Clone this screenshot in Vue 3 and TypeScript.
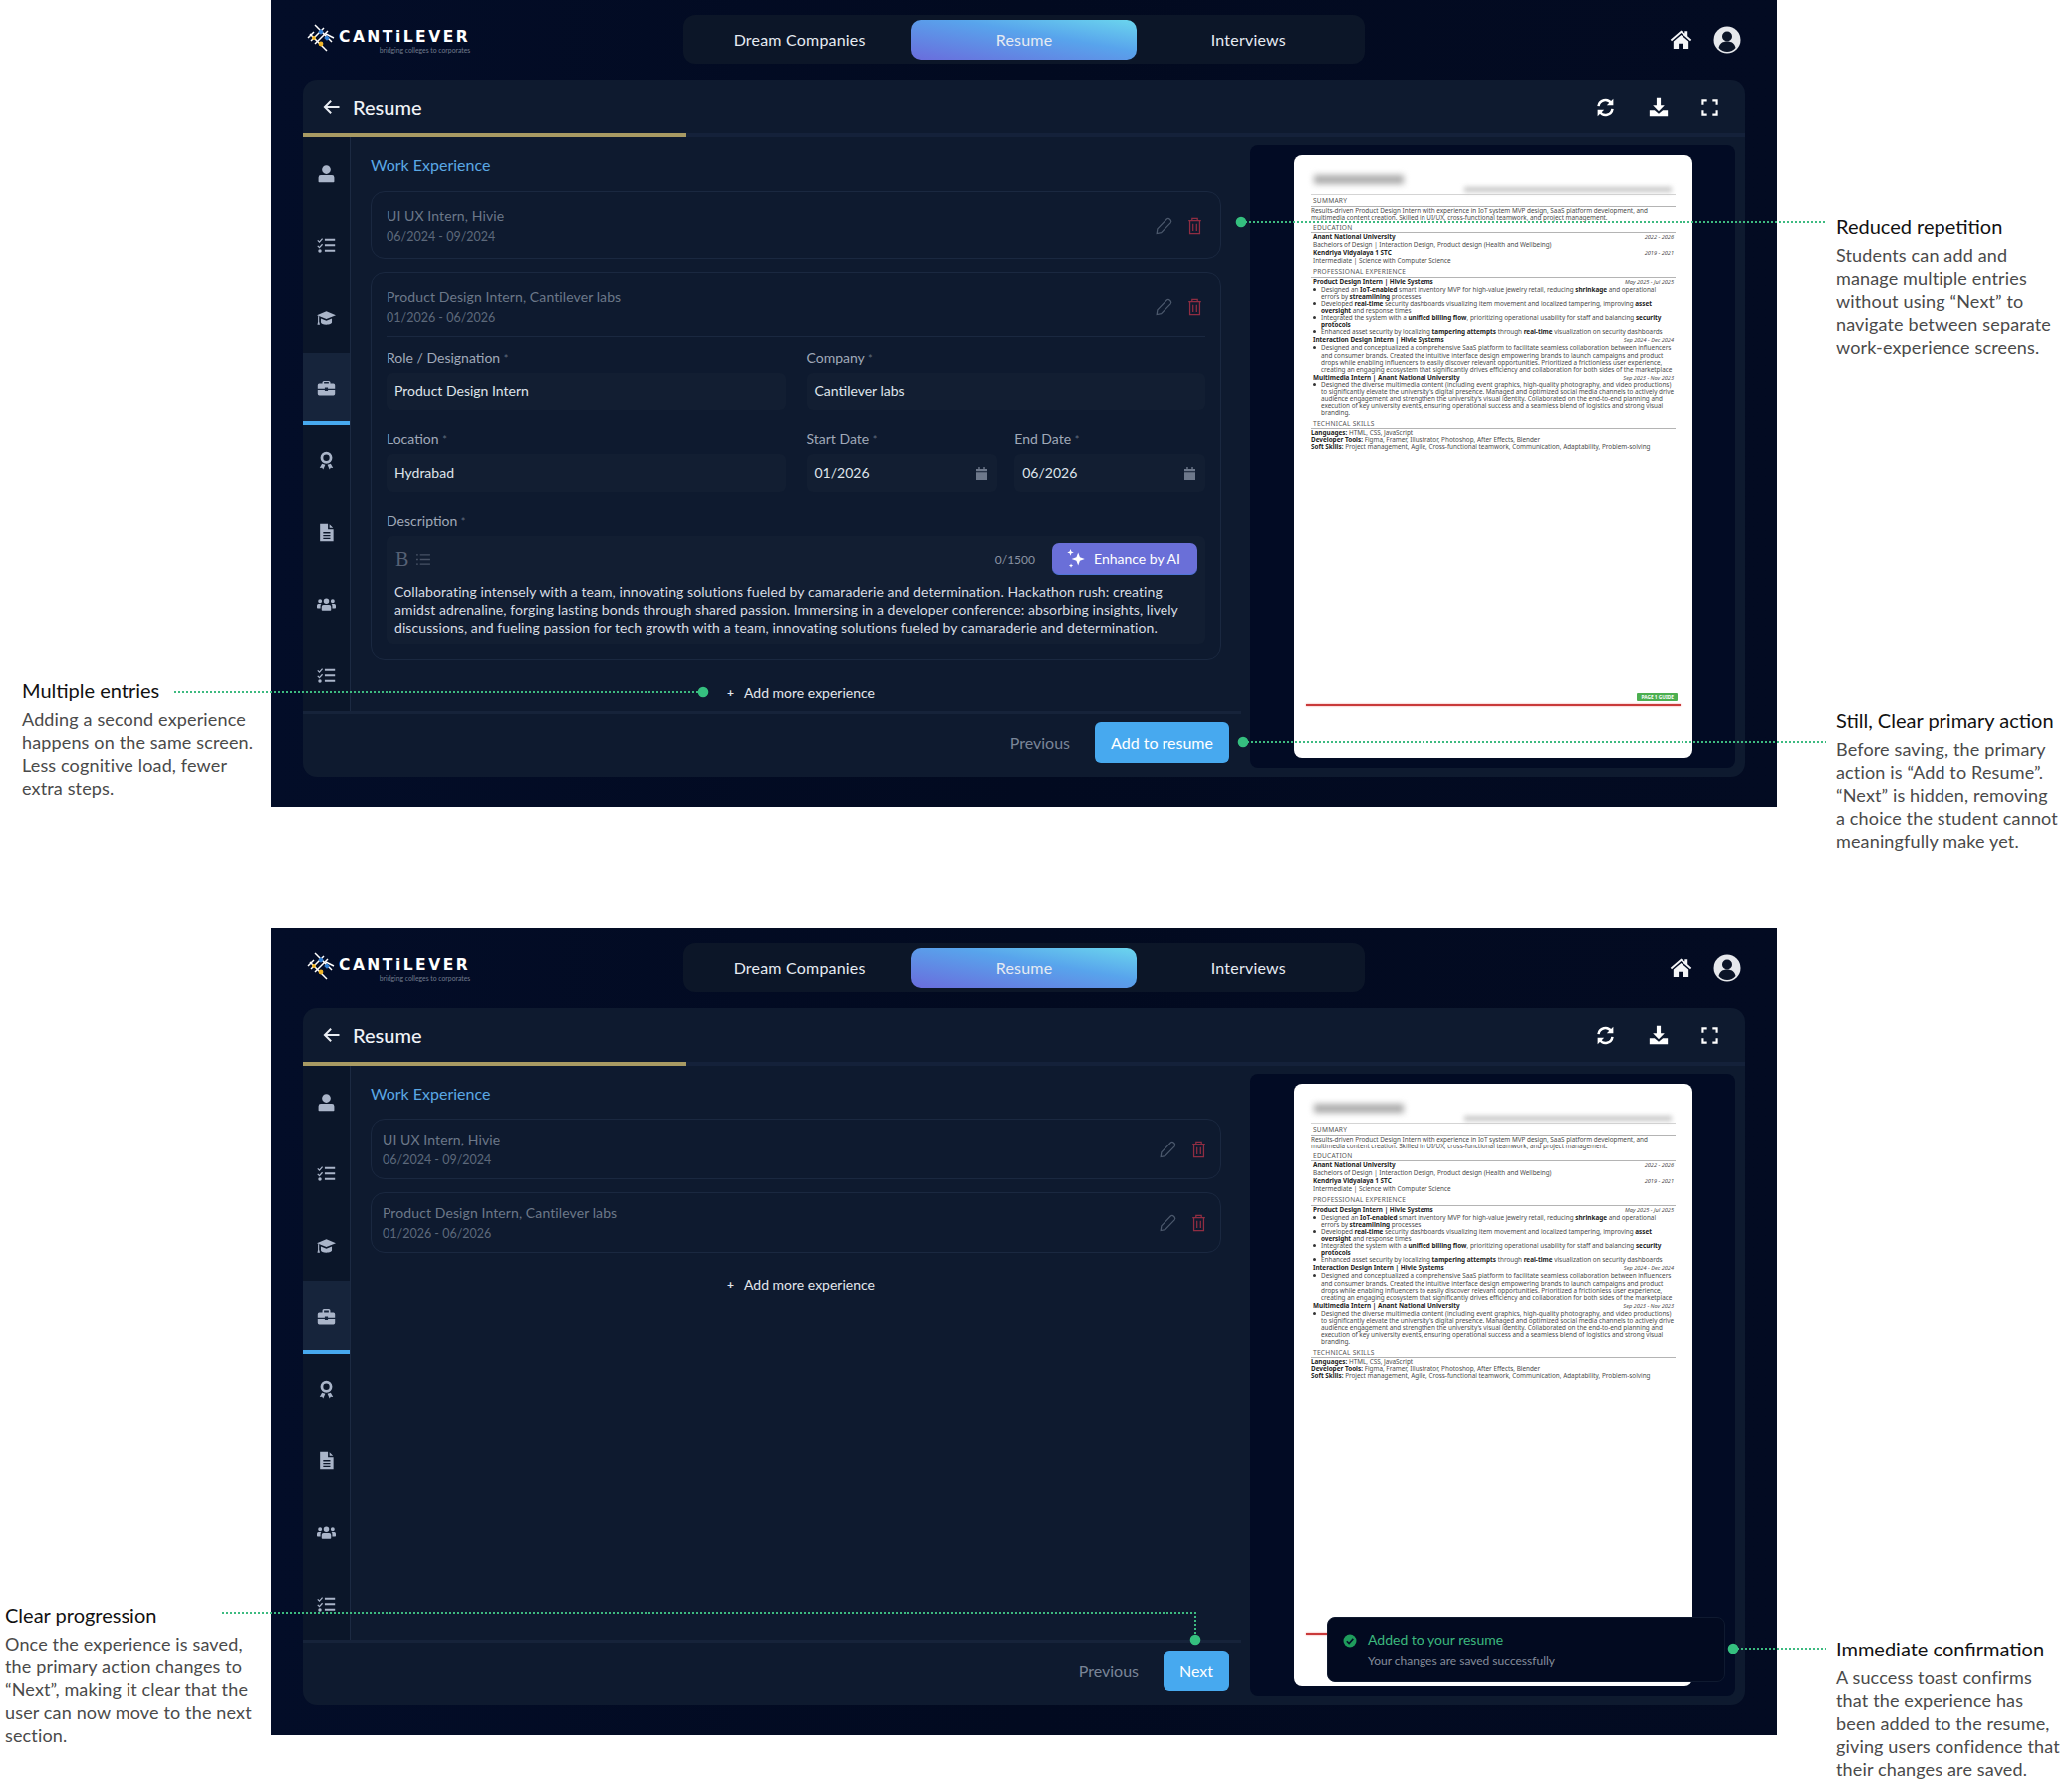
<script setup lang="ts">
interface Frame {
  id: string;
  saved: boolean;
}

interface Note {
  title: string;
  lines: string[];
  left: number;
  top: number;
}

const frames: Frame[] = [
  { id: "editing", saved: false },
  { id: "saved", saved: true },
];

const sideIcons = [
  "M12 1.5a5.5 5.5 0 1 1 0 11 5.5 5.5 0 0 1 0-11zM5 14h14a3 3 0 0 1 3 3v5a1 1 0 0 1-1 1H3a1 1 0 0 1-1-1v-5a3 3 0 0 1 3-3z",
  "M10 3.5h13V6H10zM10 10.5h13V13H10zM10 17.5h13V20H10zM1.5 5l1.6 1.6L6.4 2.8l1.2 1.1-4.4 5L.4 6.1zM1.5 12l1.6 1.6 3.3-3.8 1.2 1.1-4.4 5-2.8-2.8zM3.8 16.6a2.2 2.2 0 1 1 0 4.4 2.2 2.2 0 0 1 0-4.4z",
  "M12 4l12 5-12 5L0 9zM5 13.4V18c0 1.6 3.2 3 7 3s7-1.4 7-3v-4.6L12 16.2zM1.4 10.2l1.4.6v6.6l1 3.6H.6l.8-3.6z",
  "M9 2.5h6a2 2 0 0 1 2 2V7h4a2 2 0 0 1 2 2v4.5h-9V12h-4v1.5H1V9a2 2 0 0 1 2-2h4V4.500a2 2 0 0 1 2-2zM9 4.500V7h6V4.500zM1 15h9v1.500h4V15h9v5a2 2 0 0 1-2 2H3a2 2 0 0 1-2-2z",
  "M12 1a7.500 7.500 0 1 1 0 15 7.500 7.500 0 0 1 0-15zM12 4.500a4 4 0 1 0 0 8 4 4 0 0 0 0-8zM6.500 16l-3 5.500 3-.4 1.500 2.400 2.600-6zM17.500 16l3 5.500-3-.4-1.500 2.400-2.600-6z",
  "M4 1h10v7h7v15H4zM16 1.500L20.500 6H16zM8 11.500h9v1.800H8zM8 15h9v1.800H8zM8 18.500h9v1.800H8z",
  "M12 4.500a3.500 3.500 0 1 1 0 7 3.500 3.500 0 0 1 0-7zM8.500 12.500h7a2.500 2.500 0 0 1 2.500 2.500v4a1 1 0 0 1-1 1H7a1 1 0 0 1-1-1v-4a2.500 2.500 0 0 1 2.500-2.500zM4 5.500a2.500 2.500 0 1 1 0 5 2.500 2.500 0 0 1 0-5zM20 5.500a2.500 2.500 0 1 1 0 5 2.500 2.500 0 0 1 0-5zM2 11.500h3.500a4 4 0 0 0-1 3V17H1a1 1 0 0 1-1-1v-2.500a2 2 0 0 1 2-2zM18.500 11.500H22a2 2 0 0 1 2 2V16a1 1 0 0 1-1 1h-3.500v-2.500a4 4 0 0 0-1-3z",
  "M10 3.500h13V6H10zM10 10.500h13V13H10zM10 17.500h13V20H10zM1.500 5l1.600 1.600L6.400 2.800l1.200 1.100-4.400 5L.4 6.100zM1.500 12l1.600 1.600 3.300-3.800 1.200 1.100-4.400 5-2.800-2.800zM3.800 16.600a2.200 2.200 0 1 1 0 4.400 2.200 2.200 0 0 1 0-4.400z",
];

const notes: Note[] = [
  {
    title: "Reduced repetition",
    left: 1843,
    top: 214,
    lines: [
      "Students can add and",
      "manage multiple entries",
      "without using “Next” to",
      "navigate between separate",
      "work-experience screens.",
    ],
  },
  {
    title: "Multiple entries",
    left: 22,
    top: 680,
    lines: [
      "Adding a second experience",
      "happens on the same screen.",
      "Less cognitive load, fewer",
      "extra steps.",
    ],
  },
  {
    title: "Still, Clear primary action",
    left: 1843,
    top: 710,
    lines: [
      "Before saving, the primary",
      "action is “Add to Resume”.",
      "“Next” is hidden, removing",
      "a choice the student cannot",
      "meaningfully make yet.",
    ],
  },
  {
    title: "Clear progression",
    left: 5,
    top: 1608,
    lines: [
      "Once the experience is saved,",
      "the primary action changes to",
      "“Next”, making it clear that the",
      "user can now move to the next",
      "section.",
    ],
  },
  {
    title: "Immediate confirmation",
    left: 1843,
    top: 1642,
    lines: [
      "A success toast confirms",
      "that the experience has",
      "been added to the resume,",
      "giving users confidence that",
      "their changes are saved.",
    ],
  },
];

const connectors = [
  "M1246 223H1833",
  "M175 695H706",
  "M1248 745H1833",
  "M223 1619H1200V1646",
  "M1740 1655H1833",
];

const dots = [
  [1246, 223],
  [706, 695],
  [1248, 745],
  [1200, 1646],
  [1740, 1655],
];
</script>

<template>
  <div class="page">
    <section v-for="frame in frames" :key="frame.id" class="frame">
      <header class="topbar">
        <div class="logo">
          <svg class="logo-mark" viewBox="0 0 28 28" width="28" height="28">
            <g fill="none" stroke="#fff" stroke-width="1.500">
              <path d="M1 14l6-6M4 17l13-13M8 20L21 7" />
              <path d="M8 1l5 5M20 27l-5-5M3 10l15 15M10 3l15 15M19 10l8 4" />
            </g>
            <rect x="12" y="6" width="4" height="4" transform="rotate(45 14 8)" fill="#2f7fd6" />
            <rect x="18" y="12" width="4" height="4" transform="rotate(45 20 14)" fill="#2f7fd6" />
            <circle cx="7" cy="14" r="2" fill="#f1b629" />
            <circle cx="14" cy="20" r="2.400" fill="#f1b629" />
          </svg>
          <div class="logo-text">
            <div class="logo-name">CANTiLEVER</div>
            <div class="logo-tag">bridging colleges to corporates</div>
          </div>
        </div>

        <nav class="tabs">
          <span class="tab">Dream Companies</span>
          <span class="tab active">Resume</span>
          <span class="tab">Interviews</span>
        </nav>

        <div class="top-icons">
          <svg viewBox="0 0 24 24" width="23" height="23" fill="#f4f5f7">
            <path d="M12 2.500L.8 12.300l1.300 1.500L12 5.200l9.900 8.600 1.300-1.500-4.200-3.700V3.500h-3v2.200zM4 14.200V22h5.500v-5.500h5V22H20v-7.800l-8-7z" />
          </svg>
          <svg viewBox="0 0 28 28" width="28" height="28">
            <circle cx="14" cy="14" r="13.500" fill="#e6e8ec" />
            <circle cx="14" cy="10.500" r="5" fill="#0b1427" />
            <path d="M5.500 22c1-4.500 4-6.500 8.500-6.500s7.500 2 8.500 6.500c-2.200 2.500-5.200 4-8.500 4s-6.300-1.500-8.500-4z" fill="#0b1427" />
          </svg>
        </div>
      </header>

      <div class="main">
        <div class="main-head">
          <div class="head-left">
            <svg viewBox="0 0 24 24" width="20" height="20" fill="none" stroke="#e9edf3" stroke-width="2.400">
              <path d="M21 12H4M11 4.500L3.500 12l7.500 7.500" />
            </svg>
            <h1>Resume</h1>
          </div>
          <div class="head-right">
            <svg viewBox="0 0 24 24" width="21" height="21" fill="none" stroke="#fff" stroke-width="2.900">
              <path d="M4 10.500A8 8 0 0 1 18.500 7" />
              <path d="M20 13.500A8 8 0 0 1 5.500 17" />
              <path d="M21 2v7.500h-7.500z" fill="#fff" stroke="none" />
              <path d="M3 22v-7.500h7.500z" fill="#fff" stroke="none" />
            </svg>
            <svg viewBox="0 0 24 24" width="20" height="20" fill="#fff">
              <path d="M9.500 1h5v9h4.500L12 17 5 10h4.500zM1 16h6l5 4 5-4h6v7H1zM18 19.500h1.500V21H18zM20.500 19.500H22V21h-1.500z" />
            </svg>
            <svg viewBox="0 0 24 24" width="17" height="17" fill="none" stroke="#fff" stroke-width="3">
              <path d="M2 8V2h6M16 2h6v6M22 16v6h-6M8 22H2v-6" />
            </svg>
          </div>
        </div>
        <div class="progress"><div class="progress-fill"></div></div>

        <div class="main-body">
          <div class="left">
            <div class="left-row">
              <aside class="side">
                <div v-for="(d, i) in sideIcons" :key="i" class="side-item" :class="{ current: i === 3 }">
                  <svg viewBox="0 0 24 24" width="19" height="19" fill="currentColor" fill-rule="evenodd">
                    <path :d="d" />
                  </svg>
                </div>
              </aside>

              <div class="content" :class="{ compact: frame.saved }">
                <h2>Work Experience</h2>

                <div class="entry" :class="{ tight: frame.saved }">
                  <div class="entry-head">
                    <div>
                      <div class="entry-title">UI UX Intern, Hivie</div>
                      <div class="entry-date">06/2024 - 09/2024</div>
                    </div>
                    <div class="entry-actions">
                      <svg viewBox="0 0 20 20" width="19" height="19" fill="none" stroke="#4b586c" stroke-width="1.300">
                        <path d="M3 13.500L13 3.200c1-.9 2.200-.9 3 0l1 1c.8.800.8 2 0 3L7 17.500l-4.700 1z" />
                      </svg>
                      <svg viewBox="0 0 16 20" width="15" height="18" fill="none" stroke="#8f2d42" stroke-width="1.400">
                        <path d="M1 4h14M5 4V1.500h6V4M2.500 4v14.500h11V4M6 7.500v8M10 7.500v8" />
                      </svg>
                    </div>
                  </div>
                </div>

                <div class="entry" :class="{ tight: frame.saved }">
                  <div class="entry-head">
                    <div>
                      <div class="entry-title">Product Design Intern, Cantilever labs</div>
                      <div class="entry-date">01/2026 - 06/2026</div>
                    </div>
                    <div class="entry-actions">
                      <svg viewBox="0 0 20 20" width="19" height="19" fill="none" stroke="#4b586c" stroke-width="1.300">
                        <path d="M3 13.500L13 3.200c1-.9 2.200-.9 3 0l1 1c.8.800.8 2 0 3L7 17.500l-4.700 1z" />
                      </svg>
                      <svg viewBox="0 0 16 20" width="15" height="18" fill="none" stroke="#8f2d42" stroke-width="1.400">
                        <path d="M1 4h14M5 4V1.500h6V4M2.500 4v14.500h11V4M6 7.500v8M10 7.500v8" />
                      </svg>
                    </div>
                  </div>

                  <div v-if="!frame.saved" class="form">
                    <div class="form-row">
                      <div class="field">
                        <label>Role / Designation <i>*</i></label>
                        <div class="input">Product Design Intern</div>
                      </div>
                      <div class="field">
                        <label>Company <i>*</i></label>
                        <div class="input">Cantilever labs</div>
                      </div>
                    </div>
                    <div class="form-row">
                      <div class="field">
                        <label>Location <i>*</i></label>
                        <div class="input">Hydrabad</div>
                      </div>
                      <div class="date-pair">
                        <div class="field">
                          <label>Start Date <i>*</i></label>
                          <div class="input date">
                            01/2026
                            <svg viewBox="0 0 12 14" width="11" height="13" fill="#6d788b">
                              <path d="M2.500 0h1.500v2h4V0h1.500v2H12v2.500H0V2h2.500zM0 5.500h12V14H0z" />
                            </svg>
                          </div>
                        </div>
                        <div class="field">
                          <label>End Date <i>*</i></label>
                          <div class="input date">
                            06/2026
                            <svg viewBox="0 0 12 14" width="11" height="13" fill="#6d788b">
                              <path d="M2.500 0h1.500v2h4V0h1.500v2H12v2.500H0V2h2.500zM0 5.500h12V14H0z" />
                            </svg>
                          </div>
                        </div>
                      </div>
                    </div>
                    <div class="field">
                      <label>Description <i>*</i></label>
                      <div class="editor">
                        <div class="toolbar">
                          <span class="bold-btn">B</span>
                          <svg viewBox="0 0 16 14" width="15" height="13" fill="none" stroke="#475265" stroke-width="1.400">
                            <path d="M5 2h11M5 7h11M5 12h11M1 2h2M1 7h2M1 12h2" />
                          </svg>
                          <span class="counter">0/1500</span>
                          <button class="enhance">
                            <svg viewBox="0 0 20 20" width="22" height="22" fill="#fff">
                              <path d="M12 4l1.600 4.400L18 10l-4.400 1.600L12 16l-1.600-4.400L6 10l4.400-1.600zM5 1l.8 2.200L8 4l-2.200.8L5 7l-.8-2.200L2 4l2.200-.8zM5.500 14l.6 1.400 1.400.6-1.400.6-.6 1.400-.6-1.400L3.500 16l1.400-.6z" />
                            </svg>
                            Enhance by AI
                          </button>
                        </div>
                        <p>Collaborating intensely with a team, innovating solutions fueled by camaraderie and determination. Hackathon rush: creating<br />amidst adrenaline, forging lasting bonds through shared passion. Immersing in a developer conference: absorbing insights, lively<br />discussions, and fueling passion for tech growth with a team, innovating solutions fueled by camaraderie and determination.</p>
                      </div>
                    </div>
                  </div>
                </div>

                <div class="add-more" :class="{ tight: frame.saved }">
                  <span class="plus">+</span>
                  Add more experience
                </div>
              </div>
            </div>

            <footer class="foot">
              <span class="prev">Previous</span>
              <button class="primary" :class="{ next: frame.saved }">{{ frame.saved ? "Next" : "Add to resume" }}</button>
            </footer>
          </div>

          <div class="preview">
            <div class="sheet">
              <div class="blur-name"></div>
              <div class="blur-contact"></div>
              <div class="top-rule"></div>

              <div class="r-head">SUMMARY</div>
              <div class="r-flush">Results-driven Product Design Intern with experience in IoT system MVP design, SaaS platform development, and</div>
              <div class="r-flush">multimedia content creation. Skilled in UI/UX, cross-functional teamwork, and project management.</div>

              <div class="r-head gap">EDUCATION</div>
              <div class="r-row"><b>Anant National University</b><em>2022 - 2026</em></div>
              <div class="r-row">Bachelors of Design | Interaction Design, Product design (Health and Wellbeing)</div>
              <div class="r-row"><b>Kendriya Vidyalaya 1 STC</b><em>2019 - 2021</em></div>
              <div class="r-row">Intermediate | Science with Computer Science</div>

              <div class="r-head gap">PROFESSIONAL EXPERIENCE</div>
              <div class="r-row"><b>Product Design Intern | Hivie Systems</b><em>May 2025 - Jul 2025</em></div>
              <ul class="r-list">
                <li>Designed an <b>IoT-enabled</b> smart inventory MVP for high-value jewelry retail, reducing <b>shrinkage</b> and operational<br />errors by <b>streamlining</b> processes</li>
                <li>Developed <b>real-time</b> security dashboards visualizing item movement and localized tampering, improving <b>asset</b><br /><b>oversight</b> and response times</li>
                <li>Integrated the system with a <b>unified billing flow</b>, prioritizing operational usability for staff and balancing <b>security</b><br /><b>protocols</b></li>
                <li>Enhanced asset security by localizing <b>tampering attempts</b> through <b>real-time</b> visualization on security dashboards</li>
              </ul>
              <div class="r-row job"><b>Interaction Design Intern | Hivie Systems</b><em>Sep 2024 - Dec 2024</em></div>
              <ul class="r-list">
                <li>Designed and conceptualized a comprehensive SaaS platform to facilitate seamless collaboration between influencers<br />and consumer brands. Created the intuitive interface design empowering brands to launch campaigns and product<br />drops while enabling influencers to easily discover relevant opportunities. Prioritized a frictionless user experience,<br />creating an engaging ecosystem that significantly drives efficiency and collaboration for both sides of the marketplace</li>
              </ul>
              <div class="r-row job"><b>Multimedia Intern | Anant National University</b><em>Sep 2023 - Nov 2023</em></div>
              <ul class="r-list">
                <li>Designed the diverse multimedia content (including event graphics, high-quality photography, and video productions)<br />to significantly elevate the university's digital presence. Managed and optimized social media channels to actively drive<br />audience engagement and strengthen the university's visual identity. Collaborated on the end-to-end planning and<br />execution of key university events, ensuring operational success and a seamless blend of logistics and strong visual<br />branding.</li>
              </ul>

              <div class="r-head gap">TECHNICAL SKILLS</div>
              <div class="r-flush"><b>Languages:</b> HTML, CSS, JavaScript</div>
              <div class="r-flush"><b>Developer Tools:</b> Figma, Framer, Illustrator, Photoshop, After Effects, Blender</div>
              <div class="r-flush"><b>Soft Skills:</b> Project management, Agile, Cross-functional teamwork, Communication, Adaptability, Problem-solving</div>

              <div class="guide">
                <span>PAGE 1 GUIDE</span>
              </div>
            </div>

            <div v-if="frame.saved" class="toast">
              <svg viewBox="0 0 14 14" width="14" height="14">
                <circle cx="7" cy="7" r="6.500" fill="#1f9d5c" />
                <path d="M3.800 7.200l2.300 2.300 4.200-4.600" fill="none" stroke="#04122a" stroke-width="1.600" />
              </svg>
              <div>
                <div class="toast-title">Added to your resume</div>
                <div class="toast-sub">Your changes are saved successfully</div>
              </div>
            </div>
          </div>
        </div>
      </div>
    </section>

    <svg class="overlay" viewBox="0 0 2080 1788" width="2080" height="1788">
      <path v-for="d in connectors" :key="d" :d="d" fill="none" stroke="#3dba80" stroke-width="2" stroke-dasharray="2 2" />
      <circle v-for="c in dots" :key="c[0]" :cx="c[0]" :cy="c[1]" r="5.300" fill="#35c07f" />
    </svg>

    <div v-for="note in notes" :key="note.title" class="note" :style="{ left: note.left + 'px', top: note.top + 'px' }">
      <h3>{{ note.title }}</h3>
      <div v-for="line in note.lines" :key="line" class="note-line">{{ line }}</div>
    </div>
  </div>
</template>

<style scoped>
.page {
  position: relative;
  width: 2080px;
  height: 1788px;
  background: #fff;
  font-family: Lato, "Noto Sans", sans-serif;
  overflow: hidden;
}

.frame {
  width: 1512px;
  height: 810px;
  margin: 0 0 122px 272px;
  background: linear-gradient(90deg, #030d28, #020a20 50%, #030b22);
  color: #e6ebf2;
}

.topbar {
  height: 80px;
  display: grid;
  grid-template-columns: 1fr auto 1fr;
  align-items: start;
  padding: 15px 36px 0;
  box-sizing: border-box;
}

.logo {
  display: flex;
  gap: 4px;
  margin-top: 9px;
  align-items: flex-start;
}

.logo-text {
  margin-top: 6px;
}

.logo-name {
  font-family: "DejaVu Sans", sans-serif;
  font-weight: 700;
  font-size: 15.500px;
  line-height: 14px;
  letter-spacing: 2.500px;
  color: #fff;
}

.logo-tag {
  font-size: 6.800px;
  line-height: 9px;
  margin-top: 2px;
  text-align: right;
  color: #717b8d;
}

.tabs {
  display: flex;
  width: 684px;
  height: 49px;
  padding: 5px 4px;
  box-sizing: border-box;
  background: #0c1628;
  border-radius: 12px;
}

.tab {
  flex: 1;
  height: 40px;
  line-height: 40px;
  text-align: center;
  font-size: 16px;
  letter-spacing: 0.200px;
}

.tab.active {
  border-radius: 10px;
  background: linear-gradient(10deg, #6a6cdc, #58a4ec 60%, #6bd6ee);
}

.top-icons {
  display: flex;
  justify-content: flex-end;
  align-items: center;
  gap: 21px;
  height: 49px;
}

.main {
  margin: 0 32px;
  height: 700px;
  background: #0e1a2f;
  border-radius: 14px;
  display: flex;
  flex-direction: column;
}

.main-head {
  height: 54px;
  display: flex;
  align-items: center;
  justify-content: space-between;
  padding: 0 27px 0 19px;
}

.head-left {
  display: flex;
  align-items: center;
  gap: 11px;
}

h1 {
  margin: 0;
  font-size: 20px;
  font-weight: 500;
  color: #f0f3f7;
}

.head-right {
  display: flex;
  align-items: center;
  gap: 33px;
}

.progress {
  height: 4px;
  background: #14213a;
}

.progress-fill {
  width: 385px;
  height: 100%;
  background: #a89a63;
}

.main-body {
  flex: 1;
  display: flex;
  min-height: 0;
}

.left {
  width: 942px;
  display: flex;
  flex-direction: column;
}

.left-row {
  height: 576px;
  display: flex;
}

.side {
  width: 47px;
  border-right: 1px solid #1c2a42;
  background: #0b1629;
}

.side-item {
  height: 72px;
  display: flex;
  align-items: center;
  justify-content: center;
  color: #aab5c9;
  box-sizing: border-box;
}

.side-item.current {
  margin: 1px 0 -1px;
  background: #16243b;
  box-shadow: 0 -1px 0 #16243b;
  border-bottom: 4px solid #47a9ef;
}

.content {
  flex: 1;
  padding: 18px 20px 0;
}

h2 {
  margin: 0 0 16px;
  font-size: 16px;
  line-height: 20px;
  font-weight: 400;
  color: #5ba8e4;
}

.content.compact h2 {
  margin-bottom: 15px;
}

.entry {
  border: 1px solid #1a2840;
  border-radius: 14px;
  padding: 14px 15px 11px;
  margin-bottom: 13px;
}

.entry.tight {
  padding: 10px 11px 8px;
}

.entry-head {
  display: flex;
  justify-content: space-between;
  align-items: center;
}

.entry-title {
  font-size: 14px;
  line-height: 20px;
  letter-spacing: 0.100px;
  color: #6c7889;
}

.entry-date {
  margin-top: 1px;
  font-size: 12.500px;
  line-height: 20px;
  color: #5d697b;
}

.entry-actions {
  display: flex;
  align-items: center;
  gap: 14px;
  padding-right: 3px;
  margin-top: -2px;
}

.form {
  margin-top: 8px;
  margin-bottom: 4px;
  border-top: 1px solid #1a2840;
  padding-top: 11px;
  display: flex;
  flex-direction: column;
  gap: 19px;
}

.form-row {
  display: grid;
  grid-template-columns: 1fr 1fr;
  gap: 21px;
}

.date-pair {
  display: grid;
  grid-template-columns: 1fr 1fr;
  gap: 17px;
}

label {
  display: block;
  height: 20px;
  line-height: 20px;
  margin-bottom: 5px;
  font-size: 14px;
  color: #a0a9b8;
}

label i {
  font-style: normal;
  font-size: 11px;
  color: #5f6b7d;
}

.input {
  height: 38px;
  line-height: 38px;
  padding: 0 8px;
  background: #121e32;
  border-radius: 6px;
  font-size: 14px;
  color: #dfe4ea;
}

.input.date {
  display: flex;
  align-items: center;
  justify-content: space-between;
  padding-right: 10px;
}

.editor {
  height: 109px;
  box-sizing: border-box;
  padding: 7px 8px 0;
  background: #121e32;
  border-radius: 6px;
}

.toolbar {
  display: flex;
  align-items: center;
  height: 32px;
  gap: 7px;
}

.bold-btn {
  font-family: "Liberation Serif", serif;
  font-weight: 400;
  font-size: 20px;
  color: #566175;
  margin-left: 1px;
}

.counter {
  margin-left: auto;
  margin-right: 10px;
  font-size: 12px;
  color: #8a93a3;
}

.enhance {
  width: 146px;
  height: 32px;
  padding: 0 0 0 13px;
  display: flex;
  align-items: center;
  gap: 7px;
  border: 0;
  border-bottom: 1px solid #4f76d8;
  border-radius: 7px;
  background: #6a6fd8;
  color: #fff;
  font-family: inherit;
  font-size: 14px;
}

.editor p {
  margin: 8px 0 0;
  font-size: 14px;
  letter-spacing: 0.080px;
  line-height: 18px;
  white-space: nowrap;
  color: #d8dde4;
}

.add-more {
  margin-top: 23px;
  padding-left: 10px;
  display: flex;
  justify-content: center;
  align-items: center;
  gap: 10px;
  line-height: 20px;
  font-size: 14px;
  color: #e2e6ec;
}

.add-more.tight {
  margin-top: 22px;
}

.plus {
  font-size: 12px;
  font-weight: 700;
}

.foot {
  flex: 1;
  border-top: 3px solid #16233a;
  display: flex;
  justify-content: flex-end;
  align-items: flex-start;
  gap: 25px;
  padding: 8px 12px 0 0;
}

.prev {
  height: 41px;
  line-height: 41px;
  font-size: 16px;
  color: #7a8597;
}

.primary {
  width: 135px;
  height: 41px;
  padding: 0;
  border: 0;
  border-radius: 6px;
  background: #47a9ef;
  color: #fff;
  font-family: inherit;
  font-size: 16px;
}

.primary.next {
  width: 66px;
}

.preview {
  position: relative;
  width: 487px;
  height: 625px;
  margin: 8px 0 0 9px;
  padding: 10px 0 0 44px;
  box-sizing: border-box;
  background: #020b24;
  border-radius: 8px;
}

.sheet {
  position: relative;
  width: 400px;
  height: 605px;
  box-sizing: border-box;
  padding: 19px 17px 0;
  background: #fff;
  border-radius: 8px;
  font-family: "Noto Sans", sans-serif;
  font-size: 6.370px;
  color: #4a4a4a;
  white-space: nowrap;
}

.sheet b {
  color: #222;
}

.blur-name {
  width: 90px;
  height: 9px;
  margin: 1px 0 0 3px;
  background: #aaa;
  filter: blur(3px);
}

.blur-contact {
  width: 208px;
  height: 5px;
  margin: 3px 4px 0 auto;
  background: #c4c4c4;
  filter: blur(2.500px);
}

.top-rule {
  height: 1px;
  margin-top: 2px;
  background: #d4d4d4;
}

.r-head {
  height: 8.500px;
  margin-top: 2px;
  padding-left: 2px;
  line-height: 8px;
  font-size: 6.600px;
  letter-spacing: 0.250px;
  border-bottom: 1px solid #b4b4b4;
  color: #555;
  box-sizing: content-box;
}

.r-head.gap {
  margin-top: 3px;
}

.r-flush {
  height: 7px;
  line-height: 7px;
}

.r-row {
  display: flex;
  justify-content: space-between;
  height: 8px;
  line-height: 8px;
  padding: 0 2px;
}

.r-row.job {
  margin-top: 1.500px;
}

.r-row em {
  font-size: 5.600px;
}

.r-list {
  margin: 0;
  padding: 0 0 0 10px;
  list-style: none;
  line-height: 7.070px;
}

.r-list li {
  position: relative;
}

.r-list li::before {
  content: "";
  position: absolute;
  left: -8px;
  top: 2px;
  width: 3px;
  height: 3px;
  border-radius: 50%;
  background: #333;
}

.guide {
  position: absolute;
  left: 12px;
  right: 12px;
  top: 551px;
  height: 2px;
  background: #c93a3a;
  box-shadow: 0 0 2px #e88;
}

.guide span {
  position: absolute;
  right: 3px;
  top: -11px;
  height: 8px;
  padding: 0 4px;
  line-height: 8px;
  border-radius: 1px;
  background: #4caf50;
  color: #fff;
  font-size: 4.800px;
  font-weight: 700;
}

.toast {
  position: absolute;
  left: 77px;
  top: 545px;
  width: 400px;
  height: 66px;
  box-sizing: border-box;
  display: flex;
  gap: 11px;
  padding: 14px 15px;
  border: 1px solid #0f1a30;
  border-radius: 8px;
  background: #020a20;
}

.toast svg {
  margin-top: 2px;
}

.toast-title {
  font-size: 14px;
  line-height: 16px;
  color: #3cb87e;
}

.toast-sub {
  margin-top: 7px;
  font-size: 12px;
  line-height: 14px;
  color: #858d9c;
}

.overlay {
  position: absolute;
  left: 0;
  top: 0;
  pointer-events: none;
}

.note {
  position: absolute;
  white-space: nowrap;
}

.note h3 {
  margin: 0 0 5px;
  height: 26px;
  line-height: 26px;
  font-size: 20px;
  font-weight: 400;
  color: #111;
}

.note-line {
  height: 23px;
  line-height: 23px;
  font-size: 18px;
  letter-spacing: 0.150px;
  color: #4a4a4a;
}
</style>
